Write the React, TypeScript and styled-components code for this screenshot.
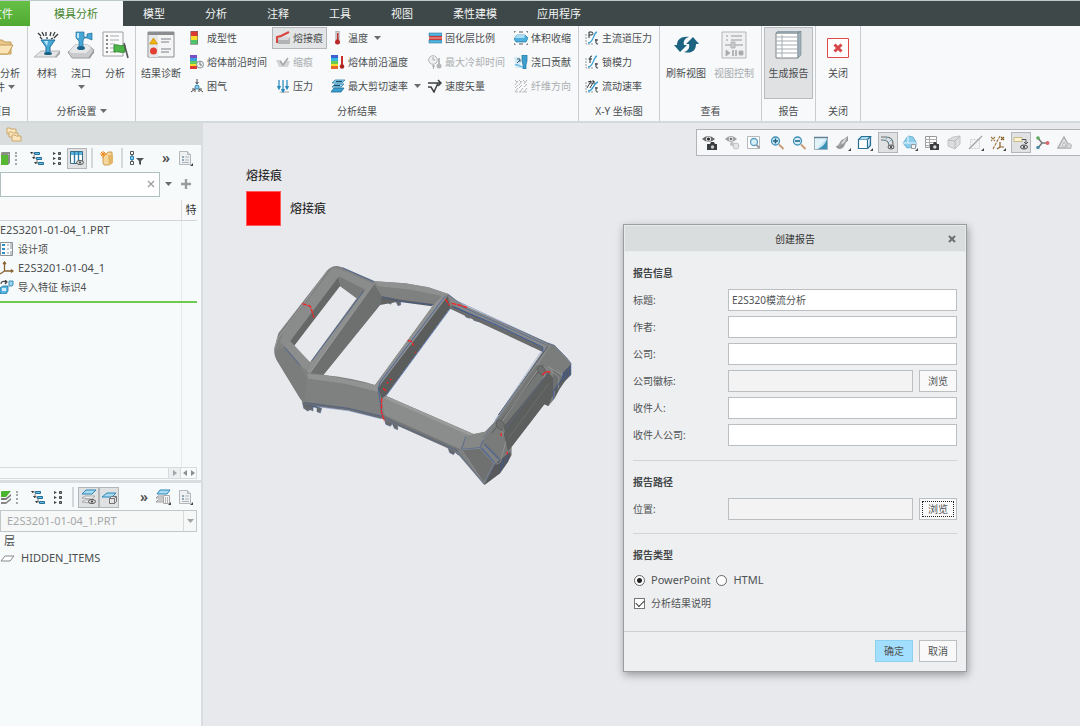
import React from 'react';
import styled, { createGlobalStyle, css } from 'styled-components';

const GlobalStyle = createGlobalStyle`
  * { box-sizing: border-box; }
  html, body, #root { height: 100%; }
  body {
    margin: 0;
    background: #e8e9ed;
    color: #4b4e50;
    font-family: "Noto Sans", "Noto Sans CJK SC", sans-serif;
    font-size: 10px;
    line-height: 14px;
    overflow: hidden;
  }
  button, input, select { font: inherit; color: inherit; }
  button { border: 0; background: none; padding: 0; margin: 0; white-space: nowrap; }
  svg { display: block; flex: none; }
`;

/* ---------- icons ---------- */

const BLUE = '#2a86b8';
const LIGHT = '#8fd0ee';
const DARK = '#4a4d4f';

const glyphs: Record<string, React.ReactNode> = {
  // 28px ribbon icons
  folder: (
    <g stroke="#c29a55">
      <path d="M2 9h14l3 2h6v12H2z" fill="#e8c88a" />
      <path d="M4 23l6-9h17l-5 9z" fill="#fae3b4" />
    </g>
  ),
  material: (
    <>
      <path d="M1 26l7-6h19l-5 6z" fill="#e3e4e5" stroke="#b4b6b8" />
      <path d="M22 26l5-6v3l-4 4z" fill="#a8aaac" />
      <path d="M5 2l3 3M9 1l2 4M13 1v4M18 1l-1 4M22 1l-2 4M25 3l-4 4M7 6l2 2M14 6v2M20 7l-2 1" stroke="#3a3c3e" strokeWidth="1.3" />
      <path d="M8 9h14l-5 7v6h-4v-6z" fill="#49a9d6" stroke="#1f6f9a" />
      <path d="M11 10h4l-1 5z" fill="#b9e4f7" />
      <ellipse cx="15" cy="22.500" rx="4" ry="1.500" fill="#1c5f85" />
    </>
  ),
  gate: (
    <>
      <path d="M1 21l7-7h13l6 5-4 8H5z" fill="#c9cbcc" stroke="#9b9d9f" />
      <path d="M8 14h13l3 3-5 5H5l-3-2z" fill="#e6e7e8" />
      <path d="M21 27l6-8v3l-5 5z" fill="#97999b" />
      <path d="M9 1h8v5h3V3l5-1v7l-5-2h-3l-1 3v6h-4v-6L9 7z" fill="#47a6d4" stroke="#1f709c" strokeWidth=".7" />
      <path d="M10 2h2v5h-2z" fill="#bfe6f7" />
      <ellipse cx="14" cy="17" rx="4" ry="2" fill="#1d628a" />
    </>
  ),
  analyze: (
    <>
      <path d="M2 1h20v24H2z" fill="#fbfbfb" stroke="#9da0a2" />
      <path d="M5 5h2M5 9h2M5 13h2M5 17h2M5 21h2" stroke="#888" strokeWidth="2" />
      <path d="M9 5h9M9 9h9M9 13h5M9 17h4M9 21h6" stroke="#a9abad" />
      <path d="M13 14c4-1 6 2 11 0v7c-5 1-7-1-11 0z" fill="#4eb648" stroke="#2f8a31" />
      <path d="M23 12l4 15" stroke="#555" strokeWidth="1.600" />
    </>
  ),
  diagnose: (
    <>
      <path d="M1 1h26v25H1z" fill="#f5f5f6" stroke="#8a8c8e" />
      <path d="M1 1h26v3H1z" fill="#8b8d90" />
      <path d="M2 4h9v22H2z" fill="#e6e7e9" />
      <path d="M6.500 7l4 6h-8z" fill="#f2b40f" stroke="#c48a00" strokeWidth=".7" />
      <circle cx="6.500" cy="20" r="3.500" fill="#e33f35" />
      <path d="M14 8h10M14 11h8M14 18h10M14 21h8" stroke="#7d8083" strokeWidth="1.200" />
    </>
  ),
  refresh: (
    <g fill="#1b6381">
      <path d="M5 14c0-6 5-9 12-8-4 1-6 4-5 8h3l-7 7-6-7z" />
      <path d="M24 13c0 7-5 10-12 8 4-1 6-4 5-8h-3l7-7 6 7z" />
    </g>
  ),
  control: (
    <g stroke="#b3b5b7" fill="none">
      <path d="M2 1h24v26H2z" fill="#f0f1f2" />
      <path d="M6 5h2M11 5h11M6 9h2M11 9h11M5 14h18" strokeWidth="1.500" />
      <path d="M11 11h4v6h-4z" fill="#c7c9ca" />
      <path d="M6 19l4 3-4 3z" fill="#a4a6a8" />
      <path d="M13 19v6M16 19v6" strokeWidth="2" />
      <path d="M19 20h4v4h-4z" fill="#a4a6a8" />
    </g>
  ),
  report: (
    <>
      <path d="M1 2h22v25H1z" fill="#fff" stroke="#7f8284" />
      <path d="M1 2l2-2h23l-3 2zM23 2l3-2v24l-3 3z" fill="#9fb2bd" stroke="#76848c" strokeWidth=".6" />
      <path d="M1 6h22M1 10h22M1 14h22M1 18h22M1 22h22M7 4v22" stroke="#a5adb2" />
    </>
  ),
  closeRed: (
    <>
      <path d="M3.500 7.500h21v19h-21z" fill="#fff" stroke="#e2494b" />
      <path d="M10.500 13.500l7 7M17.500 13.500l-7 7" stroke="#d8484a" strokeWidth="3" />
    </>
  ),
  // 14px ribbon icons
  formability: (
    <>
      <path d="M1 0h7v5H1z" fill="#dd3832" /><path d="M1 5h7v4H1z" fill="#f5dd2b" /><path d="M1 9h7v4H1z" fill="#4fc26c" />
      <path d="M.5.5h7v13h-7z" fill="none" stroke="#666" strokeWidth=".6" />
    </>
  ),
  frontTime: (
    <>
      <path d="M0 0h7v3H0z" fill="#7a4fc0" /><path d="M0 3h7v3H0z" fill="#3ba0e0" /><path d="M0 6h7v3H0z" fill="#5ecb5a" /><path d="M0 9h7v2H0z" fill="#f5dd2b" /><path d="M0 11h7v3H0z" fill="#dd3832" />
      <circle cx="10" cy="9.500" r="3.500" fill="#eceeef" stroke="#88929a" /><path d="M10 7v3h2" fill="none" stroke="#777" />
    </>
  ),
  airTrap: (
    <>
      <path d="M7 0v4M1 13l4-3M13 13l-4-3M5.500 3L7 5l1.500-2M2 10h3v3M12 10H9v3" fill="none" stroke={DARK} />
      <circle cx="7" cy="8" r="2" fill={LIGHT} stroke={BLUE} />
    </>
  ),
  weld: (
    <>
      <path d="M2 8l3-2h9v7H2z" fill="#b1b3b5" />
      <path d="M5 6h9l-2 3H2z" fill="#d8d9da" />
      <path d="M1 12V6l4-1 8-4" fill="none" stroke="#d8453f" strokeWidth="2" />
    </>
  ),
  sink: (
    <>
      <path d="M0 5h5l2 4 2-3h5l-2 6H3z" fill="#d3d5d6" />
      <path d="M4 6l3 4 5-7" fill="none" stroke="#a5a7a9" strokeWidth="1.500" />
    </>
  ),
  pressure: (
    <>
      <path d="M5 12h8v2H3z" fill="#c9cbcd" />
      <path d="M3 1v8M7 1v11M11 1v8M1.500 7L3 10l1.500-3M5.500 10L7 13l1.500-3M9.500 7l1.500 3 1.500-3" fill="none" stroke="#2486bd" strokeWidth="1.200" />
    </>
  ),
  temp: (
    <>
      <path d="M5 0h3v9H5z" fill="#eee" stroke="#777" strokeWidth=".7" /><path d="M6 2h1.500v9H6z" fill="#c82f2c" /><circle cx="6.500" cy="11" r="2.500" fill="#b92a28" />
    </>
  ),
  frontTemp: (
    <>
      <path d="M0 0h7v3H0z" fill="#3a62cf" /><path d="M0 3h7v3H0z" fill="#35b8e0" /><path d="M0 6h7v3H0z" fill="#6acb50" /><path d="M0 9h7v2H0z" fill="#f5dd2b" /><path d="M0 11h7v3H0z" fill="#e5672f" />
      <path d="M10 1h2v9h-2z" fill="#c82f2c" /><circle cx="11" cy="11.500" r="2.300" fill="#a92624" />
    </>
  ),
  shear: (
    <>
      <path d="M4 1h10l-3 3H1zM4 5h9l-3 3H1z" fill="#8fd2f0" stroke="#2b7ea9" strokeWidth=".8" />
      <path d="M3 9h10l-3 4H0z" fill="#3a9fd0" stroke="#1c6b94" strokeWidth=".8" />
      <path d="M5 2.500h6M3 6.500h6" stroke="#1f4d66" />
    </>
  ),
  frozen: (
    <>
      <path d="M1 2h13v3H1zM1 9h13v3H1z" fill="#55b4df" stroke="#2d7ba3" strokeWidth=".6" />
      <path d="M1 5h13v4H1z" fill="#c93c3a" /><path d="M1 7h13" stroke="#f2b2ac" />
    </>
  ),
  coolTime: (
    <>
      <circle cx="5" cy="5" r="4.300" fill="#f0f0f1" stroke="#b3b5b7" /><path d="M5 2v3h2" fill="none" stroke="#aaa" />
      <path d="M10 3h2v7h-2z" fill="#b9bbbd" /><circle cx="11" cy="11" r="2.500" fill="#b4b6b8" /><path d="M4 11h3M5.500 10v4" stroke="#aaa" />
    </>
  ),
  vector: <path d="M0 8h3l3 5 4-9M0 4h12M10 1l3 3-3 3" fill="none" stroke="#3d4042" strokeWidth="1.500" />,
  volume: (
    <>
      <path d="M3 4h8l3 3-2 4H2L0 8z" fill="#4eaedc" stroke="#2379a6" strokeWidth=".7" /><path d="M3 4h8l-1 3H1z" fill="#a9def4" />
      <path d="M0 2V0h2M12 0h2v2M0 12v2h2M12 14h2v-2M5 1h4M5 13h4" fill="none" stroke="#55585a" />
    </>
  ),
  gateShare: (
    <>
      <path d="M0 2h6l1 11H2z" fill="#d5e9f3" /><path d="M8 0h5v6l-1 4v4H9v-4L8 6z" fill="#3d9fce" stroke="#23729a" strokeWidth=".7" />
      <path d="M3 8l3-3M3 4h3v3" fill="none" stroke="#2a5d78" /><path d="M1 10c3-1 5 2 8 2" fill="none" stroke="#6abce0" strokeWidth="1.500" />
    </>
  ),
  fiber: (
    <g stroke="#b5b7b9" fill="none">
      <path d="M1 1l2 2M5 1l2 2M9 1l2 2M13 1l-3 4M8 2L5 6M4 2L1 6M1 9l3-3M5 9l3-3M10 8l3-3M1 13l3-4M6 13l3-4M10 13l3-4" />
      <path d="M2 13h11" strokeDasharray="2 1" />
    </g>
  ),
  plotP: (
    <>
      <path d="M1 3v10h8" fill="none" stroke="#999" strokeDasharray="2 1" /><path d="M3 12c6 0 5-10 9-11" fill="none" stroke="#3aa0d4" strokeWidth="1.300" />
      <path d="M4 7V1h2q2 0 2 1.500T6 4H4M11 8v4q0 1 2 1M10 9h3" fill="none" stroke="#26292b" />
    </>
  ),
  plotF: (
    <>
      <path d="M1 3v10h8" fill="none" stroke="#999" strokeDasharray="2 1" /><path d="M3 12c6 0 5-10 9-11" fill="none" stroke="#3aa0d4" strokeWidth="1.300" />
      <path d="M5 8V3q0-2 2-2M3.500 4H7M11 8v4q0 1 2 1M10 9h3" fill="none" stroke="#26292b" />
    </>
  ),
  plotV: (
    <>
      <path d="M1 3v10h8" fill="none" stroke="#999" strokeDasharray="2 1" /><path d="M3 12c6 0 5-8 10-9" fill="none" stroke="#3aa0d4" strokeWidth="1.300" />
      <path d="M2 9l4-7M5 9l4-7M3 3l3-1v3M7 2h2v3M11 8v4q0 1 2 1M10 9h3" fill="none" stroke="#26292b" strokeWidth=".9" />
    </>
  ),
  // 16px toolbar icons
  cube: <><path d="M1 5h9v10H1z" fill="#58b834" /><path d="M1 5l3-3h9l-3 3zM10 5l3-3v10l-3 3z" fill="#8a8f88" /></>,
  folders: (
    <g fill="#fbe6c0" stroke="#caa160" strokeWidth=".9">
      <path d="M1 2h3l1 1h5v5H1z" /><path d="M3 6h3l1 1h5v4H3z" /><path d="M6 9h3l1 1h5v5H6z" />
    </g>
  ),
  tree: (
    <>
      <path d="M2 3h3M4 8h3M6 13h3M5 5v3M8 10v3" stroke="#777" /><path d="M1 2h3L2.500 4zM3 7h3L4.500 9zM5 12h3l-1.500 2z" fill="#333" />
      <path d="M5.500 2.500h5v2h-5zM7.500 7.500h5v2h-5zM9.500 12.500h5v2h-5z" fill="#66bfe8" stroke="#256d93" />
    </>
  ),
  list: (
    <>
      <path d="M9.500 2.500h2v2h-2zM9.500 7.500h2v2h-2zM9.500 12.500h2v2h-2z" fill="#97999b" stroke="#444" />
      <path d="M4 2l3 1.500L4 5zM4 7l3 1.500L4 10zM4 12l3 1.500L4 15z" fill="#444" />
    </>
  ),
  columns: (
    <>
      <path d="M1.500 1.500h12v12h-12z" fill="#fff" stroke="#3a6d87" /><path d="M2 2h11v3H2z" fill="#5cb5df" />
      <path d="M5.500 2v11M9.500 2v11" stroke="#2d7ba3" strokeWidth="1.400" />
      <ellipse cx="11" cy="12.500" rx="3.500" ry="2" fill="#ddd" stroke="#555" /><circle cx="11" cy="12.500" r="1" fill="#444" />
    </>
  ),
  newFolder: (
    <>
      <path d="M4 4h3l2-2h4v11l-3 2H5l-1-2z" fill="#f4d59a" stroke="#c08e3e" strokeWidth=".8" /><path d="M9 5h5v8l-4 2z" fill="#e4b565" />
      <path d="M4 1v7M1 4h7M2 2l4 4M6 2L2 6" stroke="#f08a1c" />
    </>
  ),
  filter: (
    <>
      <path d="M1.500 1.500h3v3h-3z" fill="#fff" stroke="#555" /><path d="M1.500 6.500h3v3h-3z" fill={LIGHT} stroke={BLUE} /><path d="M1.500 11.500h3v3h-3z" fill="#fff" stroke="#555" />
      <path d="M3 5v1M3 10v1" stroke="#333" /><path d="M7 8h8l-3 3v4l-2-1v-3z" fill="#505355" />
    </>
  ),
  doc: (
    <>
      <path d="M2.500 1.500h8l3 3v10h-11z" fill="#eef0f1" stroke="#b5b9bc" /><path d="M10.500 1.500v3h3" fill="#d5d8da" stroke="#b5b9bc" />
      <path d="M5 7h2M5 10h2" stroke="#7393a5" strokeWidth="1.500" /><path d="M8 7h4M8 10h4M5 12.500h7" stroke="#b0b5b9" /><path d="M16 13v3h-3z" fill="#444" />
    </>
  ),
  layersGreen: (
    <>
      <path d="M0 13h8l5-4v2l-5 4H0z" fill="#888" /><path d="M0 9h8l5-4v2l-5 4H0z" fill="#777" /><path d="M0 5l4-3h9L8 8H0z" fill="#49b52f" />
    </>
  ),
  layerEye: (
    <>
      <path d="M1 5l4-4h10l-4 4z" fill="#a8daf2" stroke={BLUE} /><path d="M1 9l3-2h10l-3 3zM1 13l3-2h7l-2 3z" fill="#eee" stroke="#999" strokeWidth=".8" />
      <ellipse cx="11" cy="12.500" rx="3.500" ry="2" fill="#ddd" stroke="#555" /><circle cx="11" cy="12.500" r="1" fill="#333" />
    </>
  ),
  layerBox: (
    <><path d="M1 8l5-4h9l-4 4z" fill="#a8daf2" stroke={BLUE} /><path d="M8.500 9.500h5v5h-5zM8.500 9.500l2-2h5l-2 2M13.500 14.500l2-2v-5" fill="#e2e4e5" stroke="#777" /></>
  ),
  layerSheet: (
    <>
      <path d="M2 5l3-4h10l-3 4z" fill="#a8daf2" stroke={BLUE} /><path d="M1 9l2-2h8l-1 2zM1 13l2-2h6v2z" fill="#eee" stroke="#999" />
      <path d="M8.500 6.500h6v8h-6z" fill="#f5f5f5" stroke="#aaa" /><path d="M10 9h3M10 11h3M10 13h3" stroke="#777" strokeDasharray="1 1" /><path d="M16 13v3h-3z" fill="#444" />
    </>
  ),
  // 14px tree icons
  design: (
    <>
      <path d="M.5.5h12v13H.5z" fill="#fafbfb" stroke="#8d9499" /><path d="M3.500 2v2M3.500 6v2M3.500 10v2" stroke="#2b8fc5" strokeWidth="3" />
      <path d="M7 3h2M7 7h2M7 11h2M10 2h2M10 6h2M10 10h2M10 12h2M10 4h2" stroke="#8d9499" />
    </>
  ),
  csys: <path d="M4.500 1v9h8M4.500 10L0 13M3 3l1.500-2L6 3M11 8.500l2 1.500-2 1.500" fill="none" stroke="#8a6433" strokeWidth="1.300" />,
  importIcon: (
    <>
      <path d="M0 8l3-2h5v5l-2 3H0z" fill="#58b4e2" stroke="#25739e" strokeWidth=".8" /><path d="M2 8h4v3H2z" fill="#d3eefa" />
      <path d="M9 1h4v4l-1 1H9z" fill="#9bd6f2" stroke="#3b8cb5" /><path d="M1 4c0-3 3-3 5-2M5 0l2 2-2 2" fill="none" stroke="#444" strokeWidth="1.200" />
    </>
  ),
  sheet: <path d="M1 11l4-5h9l-4 5z" fill="#fff" stroke="#888" />,
  // 16px view tool icons
  eyeCam: (
    <>
      <path d="M0 4q6-6 13 0-6 6-13 0z" fill="#65686a" /><circle cx="6.500" cy="4" r="2.500" fill="#e9eaeb" /><circle cx="6.500" cy="4" r="1.500" fill="#222" />
      <path d="M5 9h3l1-2h3l1 2h2v6H5z" fill="#3a3d3f" /><circle cx="10.500" cy="12" r="1.700" fill="#ccc" />
    </>
  ),
  eyeGhost: (
    <>
      <path d="M1 4q6-6 12 0-6 6-12 0z" fill="#9c9fa1" /><circle cx="7" cy="4" r="2.300" fill="#e9eaeb" /><circle cx="7" cy="4" r="1.300" fill="#777" />
      <circle cx="8" cy="9" r="2" fill="#bfc1c3" /><circle cx="12" cy="11" r="3" fill="#e4e5e6" stroke="#c0c2c4" />
    </>
  ),
  zoomFit: <><path d="M1.500 1.500h12v12h-12z" fill="#fff" stroke="#b3babe" /><circle cx="8" cy="7" r="3.500" fill="#d5eef8" stroke="#5c9fbf" strokeWidth="1.300" /><path d="M10.500 10l3 3" stroke="#999" strokeWidth="2" /></>,
  zoomIn: <><circle cx="6.500" cy="6" r="4" fill="#d4edf8" stroke="#3d90b6" strokeWidth="1.300" /><path d="M4 6h5M6.500 3.500v5" stroke="#225f80" strokeWidth="1.500" /><path d="M10 9.500l4.500 4.500" stroke="#c79a74" strokeWidth="1.800" /></>,
  zoomOut: <><circle cx="6.500" cy="6" r="4" fill="#d4edf8" stroke="#3d90b6" strokeWidth="1.300" /><path d="M4 6h5" stroke="#225f80" strokeWidth="1.500" /><path d="M10 9.500l4.500 4.500" stroke="#c79a74" strokeWidth="1.800" /></>,
  repaint: <><path d="M1.500 2.500h13v12h-13z" fill="#bfe2f0" stroke="#9db1bb" /><path d="M2 3h12L4 14H2z" fill="#e3f3fa" /><path d="M14 4v10H5q7-3 9-10z" fill="#3b90b5" /><path d="M1 2.500h14" stroke="#5f8395" strokeWidth="1.500" /></>,
  shade: <><path d="M1 11c4 0 3-6 8-7l4-3v5c-4 1-2 7-8 8-2 0-4-1-4-3z" fill="#97999b" /><path d="M2 11c5 0 4-6 10-8l-3 5z" fill="#dcdddf" /><path d="M16 13v3h-3z" fill="#444" /></>,
  box3d: <><path d="M1.500 4.500h9v9h-9z" fill="#fff" stroke="#2a6f94" strokeWidth="1.200" /><path d="M1.500 4.500l3-3h9l-3 3M10.500 13.500l3-3v-9" fill="#a8daf1" stroke="#2a6f94" strokeWidth="1.200" /><path d="M16 13v3h-3z" fill="#444" /></>,
  curveEye: <><path d="M1 2h5q7 0 7 7v5M1 5h2q6 0 6 6" fill="none" stroke="#6c7072" strokeWidth="1.100" /><path d="M4 6l4-4M8 8l4-4" stroke="#45a7d2" strokeDasharray="2 1" /><ellipse cx="11" cy="12" rx="3" ry="2" fill="#ddd" stroke="#555" /><circle cx="11" cy="12" r="1" fill="#222" /></>,
  saved: <><path d="M1 8l5-7 5 1 3 5v5l-9 1z" fill="#8ccdec" stroke="#5ba6c9" strokeWidth=".8" /><path d="M6 1v7H1M6 8h8" stroke="#e8f7fd" /><path d="M9.500 9.500h4v4h-4z" fill="#f2f3f4" stroke="#999" /><path d="M16 13v3h-3z" fill="#444" /></>,
  tableCam: <><path d="M1.500 1.500h11v11h-11z" fill="#fff" stroke="#999" /><path d="M1 4.500h12M1 7.500h12M1 10.500h12M5.500 2v11" stroke="#aaa" /><path d="M6 9h3l1-2h2l1 2h2v6H6z" fill="#3a3d3f" /><circle cx="10.800" cy="12" r="1.700" fill="#ddd" /></>,
  ghostCube: <><path d="M2 5l5-3 7-1v8l-5 5-7-3z" fill="#dbdddf" stroke="#c2c4c6" /><path d="M2 5l7 1 5-5M9 6v8" fill="none" stroke="#b8babc" /></>,
  noSection: <><path d="M2.500 4.500h9v9h-9z" fill="#f1f2f3" stroke="#cfd1d3" strokeDasharray="2 1" /><path d="M1 14L14 1" stroke="#a1a4a6" strokeWidth="1.200" /><path d="M16 13v3h-3z" fill="#444" /></>,
  datum: <><path d="M1 2l4 4M5 2L1 6M3 14l7-13" fill="none" stroke="#9c7a48" strokeWidth="1.200" strokeDasharray="3 1" /><path d="M11 2l3 3M14 2l-3 3M10 7v5h4M10 12l-3 2" fill="none" stroke="#8a6227" strokeWidth="1.200" /><path d="M16 13v3h-3z" fill="#444" /></>,
  annotEye: <><path d="M1 2.500h8v4H1z" fill="#fdf3d1" stroke="#c9bb8a" /><path d="M9 4.500h4v4M11 7l2 2 2-2" fill="none" stroke="#555" /><ellipse cx="11" cy="12" rx="3.500" ry="2" fill="#ddd" stroke="#444" /><circle cx="11" cy="12" r="1" fill="#222" /></>,
  spin: <><path d="M3 3l4 5h6M7 8l-4 5" fill="none" stroke="#777" strokeWidth="1.500" /><circle cx="3" cy="3" r="1.800" fill="#5cab5e" /><circle cx="12.500" cy="8" r="2" fill="#d9696a" /><circle cx="3" cy="12.500" r="1.800" fill="#4f91ad" /></>,
  warn: <><path d="M7 2l6 11H1z" fill="#e3e4e5" stroke="#acaeb0" strokeWidth="1.500" /><path d="M7 7l2 4H5z" fill="#fff" stroke="#b3b5b7" /><circle cx="12" cy="11" r="2.500" fill="#d4d6d7" stroke="#bbbdbf" /></>,
};

const Icon = ({ name, size = 16 }: { name: string; size?: number }) => (
  <svg width={size} height={size} viewBox={`0 0 ${size} ${size}`} fill="none" aria-hidden="true">
    {glyphs[name]}
  </svg>
);

const Caret = () => (
  <svg width="7" height="4" viewBox="0 0 7 4" aria-hidden="true">
    <path d="M0 0h7L3.500 4z" fill="#6a6d6f" />
  </svg>
);

/* ---------- frame ---------- */

const Page = styled.div`
  display: flex;
  flex-direction: column;
  min-height: 100%;
`;

const TabBar = styled.nav`
  display: flex;
  height: 26px;
  border-top: 1px solid #bccaca;
  background: #3e4848;
  overflow: hidden;
`;

const Tab = styled.button<{ $active?: boolean }>`
  padding: 0 20px;
  font-size: 11px;
  color: #f2f4f4;
  ${(p) => p.$active && css`
    padding: 0 25px 0 24px;
    background: #f7f9fb;
    color: #46862c;
  `}
`;

const FileTab = styled(Tab)`
  display: flex;
  align-items: center;
  justify-content: flex-end;
  width: 30px;
  padding: 0 17px 0 0;
  background: linear-gradient(#66c046, #50a932);
  overflow: hidden;
`;

const Ribbon = styled.header`
  display: flex;
  height: 97px;
  background: #f7f9fb;
  border-bottom: 2px solid #d3dadc;
  overflow: hidden;
`;

const Group = styled.section<{ $width?: number; $pad?: number }>`
  display: flex;
  flex-direction: column;
  flex: none;
  width: ${(p) => (p.$width ? `${p.$width}px` : 'auto')};
  padding: 0 ${(p) => p.$pad ?? 0}px;
  border-right: 1px solid #c8cccf;
  overflow: hidden;
`;

const GroupBody = styled.div<{ $end?: boolean }>`
  display: flex;
  height: 74px;
  justify-content: ${(p) => (p.$end ? 'flex-end' : 'flex-start')};
`;

const GroupLabel = styled.div<{ $end?: boolean }>`
  display: flex;
  align-items: center;
  justify-content: ${(p) => (p.$end ? 'flex-end' : 'center')};
  gap: 3px;
  height: 21px;
  padding-right: ${(p) => (p.$end ? 16 : 0)}px;
  white-space: nowrap;
`;

const BigButton = styled.button<{ $width: number; $on?: boolean }>`
  display: flex;
  flex-direction: column;
  align-items: center;
  flex: none;
  gap: 7px;
  width: ${(p) => p.$width}px;
  height: 72px;
  margin-top: 1px;
  padding-top: 3px;
  border: 1px solid ${(p) => (p.$on ? '#b9bcbe' : 'transparent')};
  background: ${(p) => (p.$on ? '#dfe1e2' : 'transparent')};
  &:disabled { color: #a9acae; }
  & > svg + span { height: 14px; }
`;

/* The leftmost button runs off the window's edge, so it hangs from its right side */
const EdgeButton = styled(BigButton)`
  align-items: flex-end;
  padding-right: 6px;
  & > svg { margin-right: 6px; }
`;

const BigCaption = styled.span<{ $end?: boolean }>`
  display: flex;
  flex-direction: column;
  align-items: ${(p) => (p.$end ? 'flex-end' : 'center')};
  gap: ${(p) => (p.$end ? 0 : 5)}px;
`;

const InlineCaret = styled.span`
  display: flex;
  align-items: center;
  gap: 3px;
  padding-right: 5px;
`;

const ResultGrid = styled.div<{ $columns: string }>`
  display: grid;
  grid-template-columns: ${(p) => p.$columns};
  grid-template-rows: repeat(3, 24px);
  grid-auto-flow: column;
  align-items: center;
  justify-items: start;
`;

const SmallButton = styled.button<{ $on?: boolean }>`
  display: flex;
  align-items: center;
  gap: 3px;
  height: 22px;
  padding: 0 3px;
  border: 1px solid ${(p) => (p.$on ? '#b4b7b9' : 'transparent')};
  background: ${(p) => (p.$on ? '#e2e4e5' : 'transparent')};
  &:disabled { color: #abaeb0; }
  & > span + svg { margin-left: 3px; }
`;

const Main = styled.main`
  display: flex;
  flex: 1;
  min-height: 0;
`;

/* ---------- side panel ---------- */

const Side = styled.aside`
  display: flex;
  flex-direction: column;
  flex: none;
  width: 203px;
  background: #f7fafa;
  border-right: 2px solid #d9dddf;
`;

const SideHead = styled.div`
  display: flex;
  align-items: center;
  height: 22px;
  padding-left: 6px;
  background: #d9dddd;
`;

const SideTools = styled.div`
  display: flex;
  align-items: center;
  height: 26px;
  padding-right: 5px;
  overflow: hidden;
`;

const ToolButton = styled.button<{ $on?: boolean; $w?: number }>`
  display: flex;
  align-items: center;
  justify-content: center;
  flex: none;
  width: ${(p) => p.$w ?? 20}px;
  height: 21px;
  border: 1px solid ${(p) => (p.$on ? '#b3b6b8' : 'transparent')};
  background: ${(p) => (p.$on ? '#dfe1e2' : 'transparent')};
  overflow: hidden;
`;

const Grip = styled.span`
  width: 2px;
  height: 13px;
  margin: 0 10px 0 4px;
  border-left: 2px dotted #a5a8aa;
`;

const Rule = styled.span`
  width: 2px;
  height: 20px;
  margin: 0 4px;
  background: #d5d8da;
`;

const More = styled.button`
  margin-left: auto;
  padding: 0 4px;
  font-size: 14px;
  font-weight: 600;
`;

const SearchRow = styled.div`
  display: flex;
  align-items: center;
  gap: 5px;
  height: 26px;
`;

const AddButton = styled.button`
  padding-left: 4px;
`;

const SearchBox = styled.div`
  display: flex;
  align-items: center;
  width: 160px;
  height: 25px;
  padding-right: 4px;
  border: 1px solid #b0bfc0;
  background: #fff;
`;

const SearchInput = styled.input`
  flex: 1;
  min-width: 0;
  border: 0;
  outline: 0;
  background: none;
`;

const TreeTable = styled.table`
  flex: 1;
  width: 197px;
  margin-top: 3px;
  border-collapse: collapse;
  table-layout: fixed;
  font-size: 10px;
`;

const TreeHead = styled.th<{ $w?: number }>`
  width: ${(p) => (p.$w ? `${p.$w}px` : 'auto')};
  height: 20px;
  padding: 0 0 0 4px;
  font-size: 11px;
  font-weight: 400;
  text-align: left;
  background: #f9f9fa;
  border-bottom: 1px solid #d2d6d8;
  white-space: nowrap;
  overflow: hidden;
  & + & { border-left: 1px solid #d9dcde; color: #333; }
`;

const TreeCell = styled.td<{ $h?: number; $line?: boolean }>`
  height: ${(p) => (p.$h ? `${p.$h}px` : 'auto')};
  padding: 0;
  white-space: nowrap;
  border-top: ${(p) => (p.$line ? '2px solid #6fca50' : '0')};
  & + & { border-left: 1px solid #e6eaeb; }
`;

const TreeItem = styled.div<{ $latin?: boolean }>`
  display: flex;
  align-items: center;
  gap: 4px;
  font-size: ${(p) => (p.$latin ? 11 : 10)}px;
`;

const Scroll = styled.div`
  display: flex;
  justify-content: flex-end;
  width: 197px;
  height: 12px;
  border: 1px solid #d8dbdd;
  border-left: 0;
`;

const ScrollCell = styled.button<{ $shade?: boolean }>`
  display: flex;
  align-items: center;
  justify-content: center;
  width: ${(p) => (p.$shade ? 12 : 16)}px;
  border-left: 1px solid #d8dbdd;
  background: ${(p) => (p.$shade ? '#eceeef' : '#f9fafa')};
`;

const Splitter = styled.div`
  height: 3px;
  margin: 1px 0;
  background: #d9dddf;
`;

const SelectBox = styled.div`
  display: flex;
  flex: none;
  width: 197px;
  height: 22px;
  border: 1px solid #c3c7c9;
  background: #f6f7f7;
`;

const LayerSelect = styled.select`
  flex: 1;
  appearance: none;
  border: 0;
  padding: 0 6px;
  background: none;
  color: #a5a8aa;
  font-size: 11px;
  opacity: 1;
`;

const SelectArrow = styled.span`
  display: flex;
  align-items: center;
  justify-content: center;
  width: 13px;
  border-left: 1px solid #c3c7c9;
  opacity: 0.6;
`;

const LayerList = styled.ul`
  list-style: none;
  height: 194px;
  margin: 0;
  padding: 0;
  & > li { display: flex; align-items: center; height: 17px; gap: 5px; font-size: 11px; }
  & > li:first-child { padding-left: 4px; }
`;

/* ---------- workspace ---------- */

const Workspace = styled.section`
  position: relative;
  flex: 1;
  min-width: 0;
  display: flex;
  flex-direction: column;
  background: #e8e9ed;
`;

const ViewTools = styled.div`
  display: flex;
  align-items: center;
  align-self: flex-end;
  justify-content: space-between;
  width: 384px;
  height: 27px;
  margin-top: 6px;
  padding: 0 5px 0 3px;
  border: 1px solid #b2b5b7;
  border-right: 0;
  background: #f7f8fa;
`;

const Legend = styled.div`
  display: flex;
  flex-direction: column;
  gap: 6px;
  padding: 11px 0 0 43px;
  color: #111;
  font-size: 12px;
  line-height: 18px;
`;

const LegendRow = styled.div`
  display: flex;
  align-items: center;
  gap: 9px;
`;

const Swatch = styled.span`
  width: 35px;
  height: 35px;
  background: #ff0000;
  border: 1px solid #ff5a5a;
`;

const Part = styled.svg`
  position: absolute;
  left: 62px;
  top: 132px;
`;

/* ---------- dialog ---------- */

const Dialog = styled.form`
  position: absolute;
  left: 420px;
  top: 101px;
  width: 344px;
  border: 1px solid #9b9ea0;
  background: #eeeff1;
  box-shadow: 1px 3px 8px rgba(0, 0, 0, 0.35);
  color: #505355;
`;

const DialogTitle = styled.div`
  display: grid;
  grid-template-columns: 26px 1fr 26px;
  align-items: center;
  height: 27px;
  border: 1px solid #e9ebeb;
  background: #d9dddd;
  text-align: center;
  color: #333;
`;

const DialogClose = styled.button`
  display: flex;
  justify-content: center;
`;

const Section = styled.fieldset<{ $top: number; $bottom: number }>`
  display: flex;
  flex-direction: column;
  gap: 5px;
  min-width: 0;
  margin: 0 9px;
  padding: ${(p) => p.$top}px 0 ${(p) => p.$bottom}px;
  border: 0;
  & + & { border-top: 1px solid #d2d4d6; }
`;

const Heading = styled.div`
  height: 18px;
  line-height: 14px;
  font-weight: 700;
  color: #444749;
`;

const Field = styled.div`
  display: grid;
  grid-template-columns: 95px 1fr auto;
  align-items: center;
  height: 22px;
`;

const TextInput = styled.input`
  width: 100%;
  min-width: 0;
  height: 22px;
  padding: 0 3px 2px;
  border: 1px solid #bcbfc1;
  border-radius: 0;
  outline: 0;
  background: #fff;
  &:disabled { background: #f3f3f3; }
`;

const DialogButton = styled.button<{ $primary?: boolean; $focus?: boolean }>`
  width: 38px;
  height: 22px;
  margin-left: 6px;
  padding: 1px;
  border: 1px solid ${(p) => (p.$primary ? '#8cd0f2' : '#bcbfc1')};
  background: ${(p) => (p.$primary ? '#a2dfff' : '#f9f9f9')};
  ${(p) => p.$focus && css`
    outline: 1px dotted #222;
    outline-offset: -4px;
  `}
`;

const Options = styled.div`
  display: flex;
  align-items: center;
  gap: 5px;
  height: 18px;
`;

const Option = styled.label<{ $latin?: boolean }>`
  display: flex;
  align-items: center;
  gap: 6px;
  font-size: ${(p) => (p.$latin ? 11 : 10)}px;
`;

const Radio = styled.input`
  appearance: none;
  width: 11px;
  height: 11px;
  margin: 0 0 0 1px;
  border: 1px solid #666;
  border-radius: 50%;
  background: #fff;
  &:checked { background: radial-gradient(circle, #222 0 2px, #fff 3px); }
`;

const Check = styled.input`
  appearance: none;
  display: grid;
  place-items: center;
  width: 11px;
  height: 11px;
  margin: 0 0 0 1px;
  border: 1px solid #777;
  background: #fff;
  &:checked::before {
    content: '';
    width: 7px;
    height: 4px;
    margin-bottom: 2px;
    border: solid #333;
    border-width: 0 0 1px 1px;
    transform: rotate(-45deg);
  }
`;

const Footer = styled.div`
  display: flex;
  justify-content: flex-end;
  padding: 8px 9px 9px;
  border-top: 1px solid #cccfd1;
`;

/* ---------- data ---------- */

type Result = { icon: string; text: string; on?: boolean; off?: boolean; menu?: boolean };

const results: Result[] = [
  { icon: 'formability', text: '成型性' },
  { icon: 'frontTime', text: '熔体前沿时间' },
  { icon: 'airTrap', text: '困气' },
  { icon: 'weld', text: '熔接痕', on: true },
  { icon: 'sink', text: '缩痕', off: true },
  { icon: 'pressure', text: '压力' },
  { icon: 'temp', text: '温度', menu: true },
  { icon: 'frontTemp', text: '熔体前沿温度' },
  { icon: 'shear', text: '最大剪切速率', menu: true },
  { icon: 'frozen', text: '固化层比例' },
  { icon: 'coolTime', text: '最大冷却时间', off: true },
  { icon: 'vector', text: '速度矢量' },
  { icon: 'volume', text: '体积收缩' },
  { icon: 'gateShare', text: '浇口贡献' },
  { icon: 'fiber', text: '纤维方向', off: true },
];

const plots: Result[] = [
  { icon: 'plotP', text: '主流道压力' },
  { icon: 'plotF', text: '锁模力' },
  { icon: 'plotV', text: '流动速率' },
];

const viewTools = ['eyeCam', 'eyeGhost', 'zoomFit', 'zoomIn', 'zoomOut', 'repaint', 'shade', 'box3d', 'curveEye',
  'saved', 'tableCam', 'ghostCube', 'noSection', 'datum', 'annotEye', 'spin', 'warn'];
const pressed = ['curveEye', 'annotEye'];

const fields = [
  { id: 'title', label: '标题:', value: 'E2S320模流分析' },
  { id: 'author', label: '作者:' },
  { id: 'company', label: '公司:' },
  { id: 'logo', label: '公司徽标:', browse: true },
  { id: 'recipient', label: '收件人:' },
  { id: 'recipientCompany', label: '收件人公司:' },
];

const Results = ({ items, columns }: { items: Result[]; columns: string }) => (
  <ResultGrid $columns={columns}>
    {items.map((r) => (
      <SmallButton key={r.text} type="button" $on={r.on} disabled={r.off}>
        <Icon name={r.icon} size={14} />
        <span>{r.text}</span>
        {r.menu && <Caret />}
      </SmallButton>
    ))}
  </ResultGrid>
);

const Big = ({ icon, text, width, on, off, menu }: { icon: string; text: string; width: number; on?: boolean; off?: boolean; menu?: boolean }) => (
  <BigButton type="button" $width={width} $on={on} disabled={off}>
    <Icon name={icon} size={28} />
    <BigCaption>
      <span>{text}</span>
      {menu && <Caret />}
    </BigCaption>
  </BigButton>
);

/* The molded frame, seen in perspective; drawn at three units to the pixel */
const FramePart = () => (
  <Part width="320" height="240" viewBox="0 0 960 720" fill="none" role="img" aria-label="熔接痕">
    {/* clips under the rails */}
    <path d="M112 440l4 20 12 8 8-4 8 4v-12l12 2v12l10 4 4-14zM358 490l4 18 14 6 6-8 6 14 10 4v-22zM548 575l6 18 12 6 4-8 8 8 10 2v-16zM345 122l10 22 10-4 12 8 6-10 10 2 6 12 8-2v-20zM598 168l4 18 12 4 6-8 6 14 14 4v-22zM788 256l4 14 12 6 4-8 8 10 14 4v-16z" fill="#68696b" stroke="#46618f" strokeWidth="1.500" />
    {/* body with its three windows */}
    <path
      fillRule="evenodd"
      fill="#808181"
      d="M185 48Q200 31 218 33L236 38 330 79 420 85 490 97 550 117 575 137 605 155 845 262 868 270 905 308 918 325V360L900 378 885 400 868 408V432L850 453 838 448 740 575V600L728 622 705 655 658 690 585 605 570 588 400 513 350 490 250 465 118 447 105 430 35 315Q26 300 28 280L40 235 75 190ZM223 92 85 275 135 322 275 130ZM345 150 175 360Q260 368 330 390L505 150 400 138 355 141ZM553 160 362 422 625 537 660 530 690 500 832 290 800 274 600 180Z"
    />
    {/* left window walls */}
    <path d="M218 62L226 92 85 275 74 258Z" fill="#666767" />
    <path d="M222 62L302 103 275 130 226 92Z" fill="#787979" />
    <path d="M66 250L76 258 135 322 125 345 104 332 60 278Z" fill="#8c8d8d" />
    <path d="M28 290L60 275 108 333 126 368 118 447 105 430 35 315Z" fill="#7b7c7c" />
    <path d="M200 42Q212 36 230 44L326 86 302 105 222 64 76 258 60 274 44 262 56 232Z" fill="#8a8b8b" />
    <path d="M185 50L56 228 38 250 28 285" stroke="#999b9b" strokeWidth="3" />
    <path d="M330 82L302 105 135 325 125 348 135 357 175 330Z" fill="#8e9090" />
    <path d="M326 84L350 124 345 150 175 360 136 355Z" fill="#6e6f6f" />
    <path d="M330 82L136 352" stroke="#9b9d9d" strokeWidth="3" />
    {/* top rail */}
    <path d="M330 79L420 85 490 97 550 117 532 124 440 105 338 94Z" fill="#8f9191" />
    <path d="M338 94L440 105 530 124 508 150 400 138 350 124Z" fill="#7f8080" />
    <path d="M350 124L410 134 505 147 500 154 400 140 345 150Z" fill="#616363" />
    {/* lower left rail */}
    <path d="M126 357L180 360 330 390 342 400 338 412 240 388 130 372Z" fill="#919393" />
    <path d="M130 371L240 386 340 410 350 482 250 458 118 440Z" fill="#7f8080" />
    <path d="M116 440L250 458 350 482V491L250 466 118 449Z" fill="#6f7070" />
    {/* middle bar */}
    <path d="M505 150L532 122 545 120 540 132 350 388 340 402 330 390Z" fill="#909191" />
    <path d="M548 124L556 158 365 418 350 432 340 400 350 384 540 134Z" fill="#5b5c5c" />
    {/* upper right rail */}
    <path d="M550 117L575 137 605 155 845 262 838 280 600 170 562 150Z" fill="#888a8a" />
    <path d="M562 150L600 168 832 276V290L600 182 553 160Z" fill="#6a6b6c" />
    {/* lower right rail */}
    <path d="M362 422L625 537 602 545 585 583 360 486 350 432Z" fill="#8b8c8c" />
    <path d="M362 422L625 537 618 543 358 430Z" fill="#9a9b9b" />
    <path d="M352 478L585 583 575 592 400 513 350 490Z" fill="#747575" />
    {/* right end */}
    <path d="M845 266L868 272 915 325 896 350 848 335 820 330 832 290Z" fill="#7b7c7c" />
    <path d="M838 270L858 270 820 330 672 545 648 560 645 575 590 583 602 545 660 530 690 500 832 290Z" fill="#868787" />
    <path d="M815 330L850 350 720 525 690 505Z" fill="#757676" />
    <path d="M850 352L864 368V420L850 453 838 448 740 575 728 590 712 520Z" fill="#5d5e5e" />
    <path d="M864 340L890 362 885 400 864 410Z" fill="#6e6f70" />
    <path d="M896 350L917 328V360L900 378 885 400 868 432 868 405 890 372Z" fill="#5b5d61" />
    <path d="M692 505L722 560 730 595 708 622 650 575 660 548Z" fill="#797a7a" />
    <path d="M588 585L645 580 690 626 658 688Z" fill="#6f7070" />
    <path d="M645 575L660 568 706 622 690 630Z" fill="#808181" />
    <path d="M690 628L735 590 738 600 728 622 705 655 658 690Z" fill="#58595c" />
    <path d="M835 330L680 535M848 275L700 480" stroke="#5c5e5e" strokeWidth="3" />
    <path d="M842 278L688 502M828 332L700 515" stroke="#a0a2a2" strokeWidth="2" />
    <path d="M852 385L730 550M840 365L722 520" stroke="#6d6e6e" strokeWidth="3" />
    <path d="M850 335L893 362M858 348L882 366 880 400" stroke="#a3a5a5" strokeWidth="2" />
    <path d="M590 584L645 580 688 626 656 684ZM722 560L706 622 692 628" stroke="#9b9c9c" strokeWidth="2" />
    <ellipse cx="829" cy="346" rx="10" ry="15" transform="rotate(-28 829 346)" fill="#6e7070" stroke="#555" strokeWidth="2" />
    <ellipse cx="706" cy="510" rx="11" ry="16" transform="rotate(-28 706 510)" fill="#6e7070" stroke="#555" strokeWidth="2" />
    <path d="M838 355q4 12-4 12M716 520q4 14-4 18" stroke="#a5a7a7" strokeWidth="2" />
    {/* feature edges */}
    <g stroke="#2f559f" strokeWidth="2" opacity=".85">
      <path d="M232 38L326 80M296 108L140 318M60 278L106 332" />
      <path d="M118 443L250 460 350 484 402 510 575 586 656 686M120 450L250 467 350 491" strokeWidth="1.500" />
      <path d="M352 126L400 138 505 150" />
      <path d="M540 124L345 382 340 402 352 484M556 160L362 424" strokeWidth="2.500" />
      <path d="M550 119L576 138 845 263 868 271 906 309 918 325V360M575 148L840 268" strokeWidth="1.500" />
      <path d="M566 156L690 208 832 276 834 290" strokeWidth="3" />
      <path d="M602 545L590 583 645 578 690 626 662 676M660 568L706 612 700 622M645 578L655 555" strokeWidth="1.500" />
      <path d="M658 568L700 612M650 578L688 622M708 622V646M716 612V636M726 602V622" strokeWidth="2.500" />
      <path d="M898 350V376M906 342V368M914 334V362M864 410L890 374 896 352M866 410V432" strokeWidth="2.500" />
      <path d="M848 272L655 550M828 290L690 496M850 352L722 522" strokeWidth="1" />
    </g>
    {/* weld lines */}
    <g stroke="#f62424" strokeWidth="4">
      <path d="M112 146L136 154 147 188M428 256L440 260 446 272M541 132L554 152M560 145L582 150 608 158M350 430L349 470 358 498M832 360L842 350 856 351" strokeDasharray="14 3" />
      <path d="M380 373L374 374M370 381L366 386M354 400L363 408M452 290v4M709 534v9M727 590v8" />
    </g>
  </Part>
);

export default function App() {
  return (
    <>
      <GlobalStyle />
      <Page>
        <TabBar>
          <FileTab type="button">文件</FileTab>
          <Tab type="button" $active>模具分析</Tab>
          {['模型', '分析', '注释', '工具', '视图', '柔性建模', '应用程序'].map((t) => (
            <Tab key={t} type="button">{t}</Tab>
          ))}
        </TabBar>

        <Ribbon>
          <Group $width={28}>
            <GroupBody $end>
              <EdgeButton type="button" $width={40}>
                <Icon name="folder" size={28} />
                <BigCaption $end>
                  <span>分析</span>
                  <InlineCaret>件<Caret /></InlineCaret>
                </BigCaption>
              </EdgeButton>
            </GroupBody>
            <GroupLabel $end>项目</GroupLabel>
          </Group>
          <Group $width={108} $pad={2}>
            <GroupBody>
              <Big icon="material" text="材料" width={34} />
              <Big icon="gate" text="浇口" width={34} menu />
              <Big icon="analyze" text="分析" width={34} />
            </GroupBody>
            <GroupLabel>分析设置<Caret /></GroupLabel>
          </Group>
          <Group $width={443}>
            <GroupBody>
              <Big icon="diagnose" text="结果诊断" width={50} />
              <Results items={results} columns="86px 55px 97px 86px 67px" />
            </GroupBody>
            <GroupLabel>分析结果</GroupLabel>
          </Group>
          <Group $width={81} $pad={2}>
            <GroupBody>
              <Results items={plots} columns="76px" />
            </GroupBody>
            <GroupLabel>X-Y 坐标图</GroupLabel>
          </Group>
          <Group $width={102} $pad={2}>
            <GroupBody>
              <Big icon="refresh" text="刷新视图" width={48} />
              <Big icon="control" text="视图控制" width={48} off />
            </GroupBody>
            <GroupLabel>查看</GroupLabel>
          </Group>
          <Group $width={54} $pad={2}>
            <GroupBody>
              <Big icon="report" text="生成报告" width={49} on />
            </GroupBody>
            <GroupLabel>报告</GroupLabel>
          </Group>
          <Group $width={45}>
            <GroupBody>
              <Big icon="closeRed" text="关闭" width={44} />
            </GroupBody>
            <GroupLabel>关闭</GroupLabel>
          </Group>
        </Ribbon>

        <Main>
          <Side>
            <SideHead><Icon name="folders" /></SideHead>
            <SideTools>
              <ToolButton type="button" $w={11} aria-label="模型树"><Icon name="cube" /></ToolButton>
              <Grip />
              <ToolButton type="button" aria-label="树"><Icon name="tree" /></ToolButton>
              <ToolButton type="button" aria-label="列表"><Icon name="list" /></ToolButton>
              <ToolButton type="button" $on aria-label="列"><Icon name="columns" /></ToolButton>
              <Rule />
              <ToolButton type="button" aria-label="新建"><Icon name="newFolder" /></ToolButton>
              <Rule />
              <ToolButton type="button" aria-label="过滤"><Icon name="filter" /></ToolButton>
              <More type="button">»</More>
              <ToolButton type="button" $w={22} aria-label="设置"><Icon name="doc" /></ToolButton>
            </SideTools>
            <SearchRow>
              <SearchBox>
                <SearchInput type="text" aria-label="搜索" />
                <svg width="8" height="8" viewBox="0 0 8 8"><path d="M1 1l6 6M7 1L1 7" stroke="#999c9e" strokeWidth="1.200" /></svg>
              </SearchBox>
              <Caret />
              <AddButton type="button" aria-label="添加">
                <svg width="10" height="10" viewBox="0 0 10 10"><path d="M5 0v10M0 5h10" stroke="#999c9e" strokeWidth="2.400" /></svg>
              </AddButton>
            </SearchRow>
            <TreeTable>
              <thead>
                <tr><TreeHead /><TreeHead $w={16}>特</TreeHead></tr>
              </thead>
              <tbody>
                <tr><TreeCell $h={19}><TreeItem $latin>E2S3201-01-04_1.PRT</TreeItem></TreeCell><TreeCell /></tr>
                <tr><TreeCell $h={19}><TreeItem><Icon name="design" size={14} />设计项</TreeItem></TreeCell><TreeCell /></tr>
                <tr><TreeCell $h={19}><TreeItem $latin><Icon name="csys" size={14} />E2S3201-01-04_1</TreeItem></TreeCell><TreeCell /></tr>
                <tr><TreeCell $h={19}><TreeItem><Icon name="importIcon" size={14} />导入特征 标识4</TreeItem></TreeCell><TreeCell /></tr>
                <tr><TreeCell $h={6} /><TreeCell /></tr>
                <tr><TreeCell $line /><TreeCell $line /></tr>
              </tbody>
            </TreeTable>
            <Scroll>
              <ScrollCell type="button" $shade aria-label="向右滚动">
                <svg width="4" height="6" viewBox="0 0 4 6"><path d="M0 0v6l4-3z" fill="#a2a5a7" /></svg>
              </ScrollCell>
              <ScrollCell type="button" aria-label="滚动列">
                <svg width="12" height="6" viewBox="0 0 12 6"><path d="M4 0v6L0 3zM8 0v6l4-3z" fill="#8b8e90" /></svg>
              </ScrollCell>
            </Scroll>
            <Splitter />
            <SideTools>
              <ToolButton type="button" $w={12} aria-label="层"><Icon name="layersGreen" /></ToolButton>
              <Grip />
              <ToolButton type="button" aria-label="树"><Icon name="tree" /></ToolButton>
              <ToolButton type="button" aria-label="列表"><Icon name="list" /></ToolButton>
              <Rule />
              <ToolButton type="button" $on $w={21} aria-label="显示层"><Icon name="layerEye" /></ToolButton>
              <ToolButton type="button" $on aria-label="层项"><Icon name="layerBox" /></ToolButton>
              <More type="button">»</More>
              <ToolButton type="button" $w={22} aria-label="层表"><Icon name="layerSheet" /></ToolButton>
              <ToolButton type="button" $w={22} aria-label="设置"><Icon name="doc" /></ToolButton>
            </SideTools>
            <SelectBox>
              <LayerSelect disabled aria-label="模型">
                <option>E2S3201-01-04_1.PRT</option>
              </LayerSelect>
              <SelectArrow><Caret /></SelectArrow>
            </SelectBox>
            <LayerList>
              <li>层</li>
              <li><Icon name="sheet" />HIDDEN_ITEMS</li>
            </LayerList>
          </Side>

          <Workspace>
            <ViewTools>
              {viewTools.map((name) => (
                <ToolButton key={name} type="button" $on={pressed.includes(name)} aria-label={name}>
                  <Icon name={name} />
                </ToolButton>
              ))}
            </ViewTools>
            <Legend>
              <span>熔接痕</span>
              <LegendRow><Swatch />熔接痕</LegendRow>
            </Legend>
            <FramePart />

            <Dialog onSubmit={(e) => e.preventDefault()}>
              <DialogTitle>
                <span />
                <span>创建报告</span>
                <DialogClose type="button" aria-label="关闭">
                  <svg width="8" height="8" viewBox="0 0 8 8"><path d="M1 1l6 6M7 1L1 7" stroke="#6d7072" strokeWidth="2" /></svg>
                </DialogClose>
              </DialogTitle>
              <Section $top={14} $bottom={14}>
                <Heading>报告信息</Heading>
                {fields.map((f) => (
                  <Field key={f.id}>
                    <label htmlFor={f.id}>{f.label}</label>
                    <TextInput id={f.id} type="text" defaultValue={f.value} disabled={f.browse} />
                    {f.browse && <DialogButton type="button">浏览</DialogButton>}
                  </Field>
                ))}
              </Section>
              <Section $top={14} $bottom={13}>
                <Heading>报告路径</Heading>
                <Field>
                  <label htmlFor="location">位置:</label>
                  <TextInput id="location" type="text" disabled />
                  <DialogButton type="button" $focus>浏览</DialogButton>
                </Field>
              </Section>
              <Section $top={14} $bottom={19}>
                <Heading>报告类型</Heading>
                <Options>
                  <Option $latin><Radio type="radio" name="kind" defaultChecked />PowerPoint</Option>
                  <Option $latin><Radio type="radio" name="kind" />HTML</Option>
                </Options>
                <Options>
                  <Option><Check type="checkbox" defaultChecked />分析结果说明</Option>
                </Options>
              </Section>
              <Footer>
                <DialogButton type="submit" $primary>确定</DialogButton>
                <DialogButton type="button">取消</DialogButton>
              </Footer>
            </Dialog>
          </Workspace>
        </Main>
      </Page>
    </>
  );
}
